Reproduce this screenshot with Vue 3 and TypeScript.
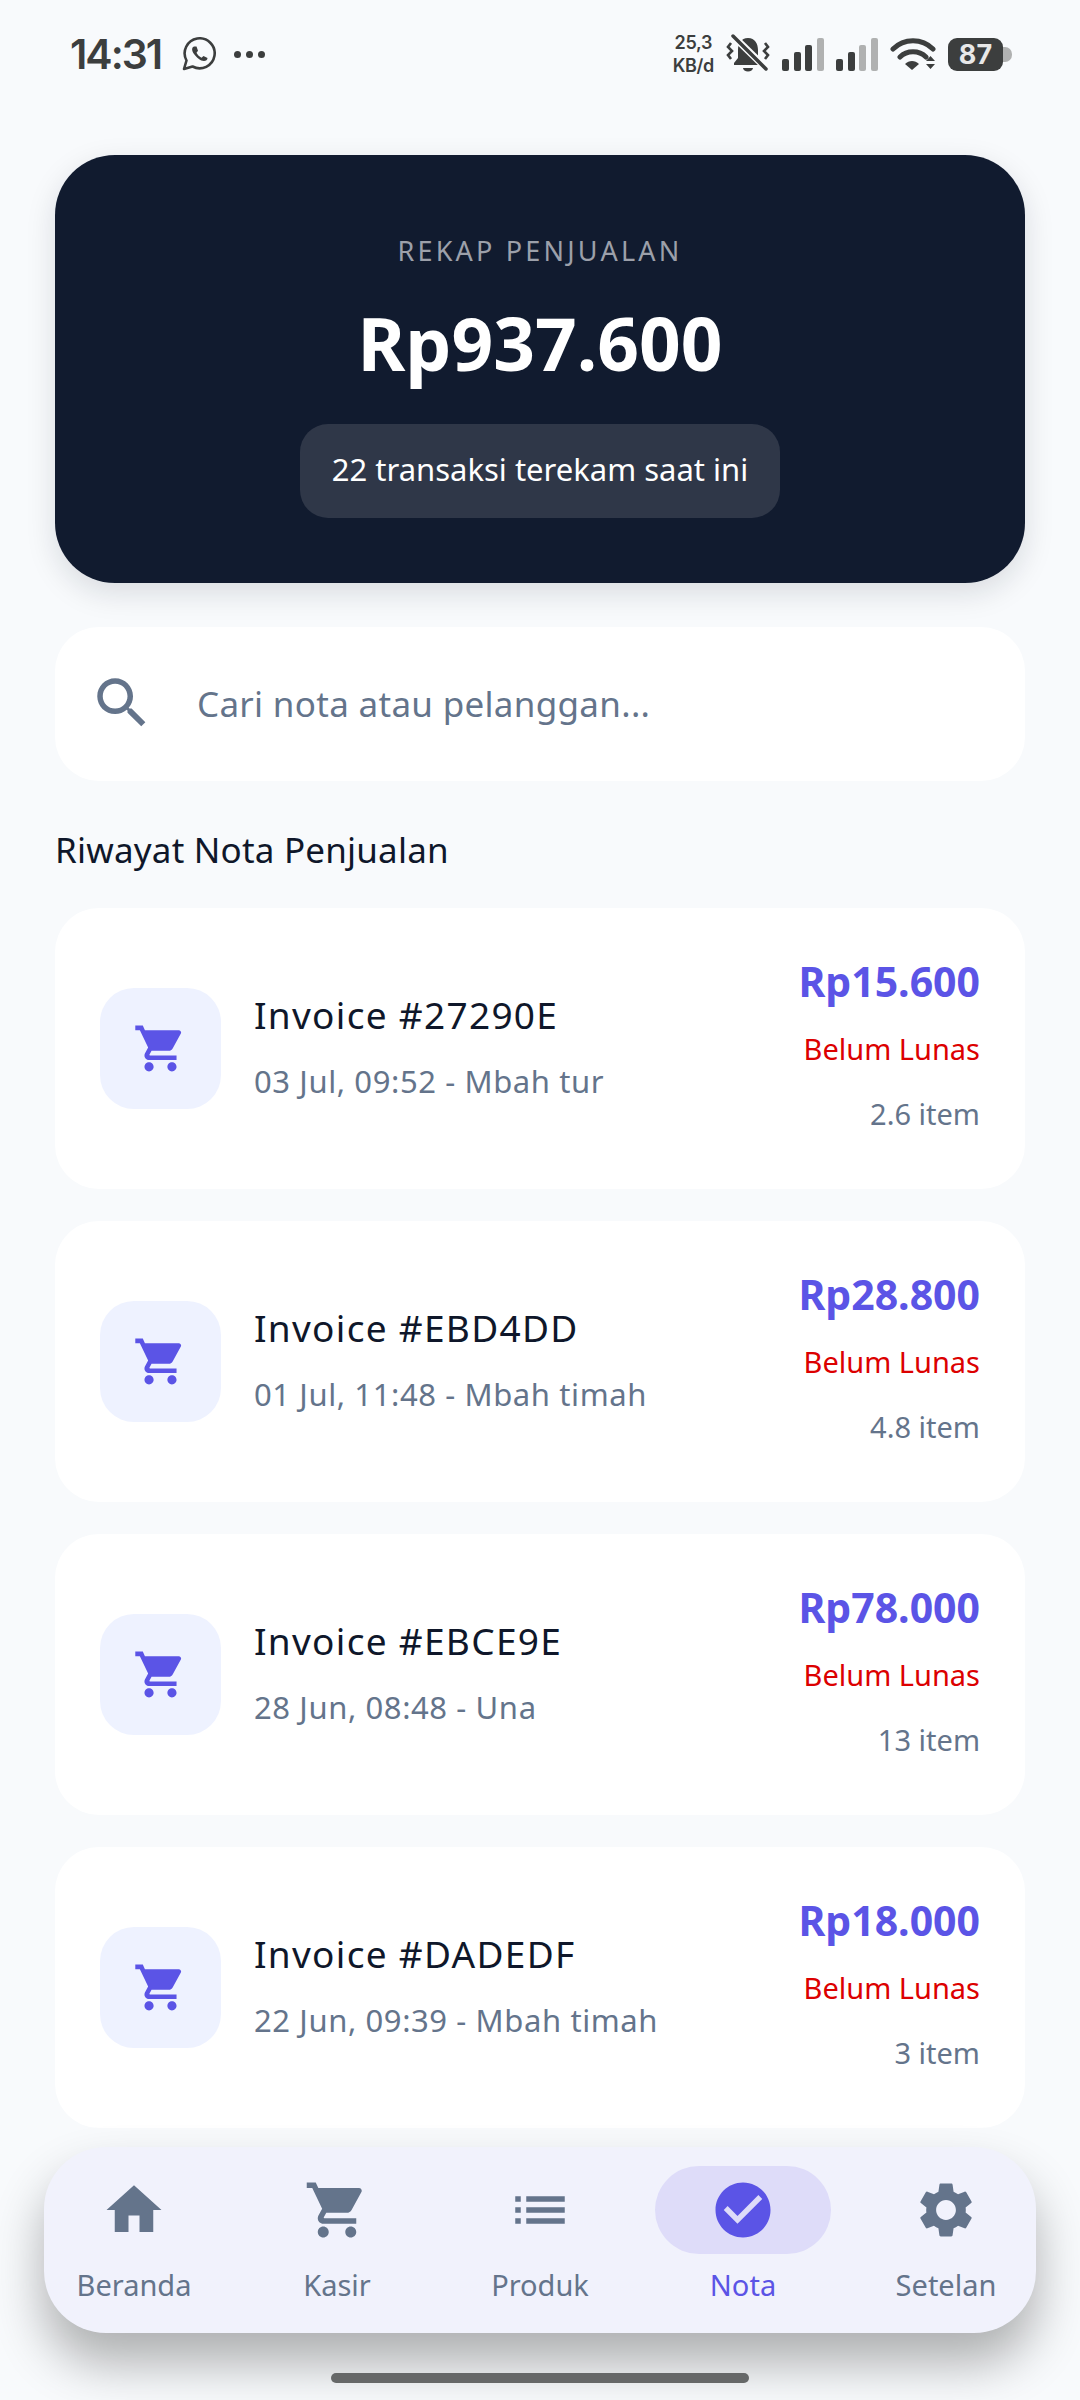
<script setup lang="ts">
const icons = {
  home: 'M10 20v-6h4v6h5v-8h3L12 3 2 12h3v8z',
  cart: 'M7 18c-1.1 0-1.99.9-1.99 2S5.9 22 7 22s2-.9 2-2-.9-2-2-2zM1 2v2h2l3.6 7.59-1.35 2.45c-.16.28-.25.61-.25.96 0 1.1.9 2 2 2h12v-2H7.42c-.14 0-.25-.11-.25-.25l.03-.12.9-1.63h7.45c.75 0 1.41-.41 1.75-1.03l3.58-6.49c.08-.14.12-.31.12-.48 0-.55-.45-1-1-1H5.21l-.94-2H1zm16 16c-1.1 0-1.99.9-1.99 2s.89 2 1.99 2 2-.9 2-2-.9-2-2-2z',
  list: 'M3 13h2v-2H3v2zm0 4h2v-2H3v2zm0-8h2V7H3v2zm4 4h14v-2H7v2zm0 4h14v-2H7v2zM7 7v2h14V7H7z',
  check: 'M12 2C6.48 2 2 6.48 2 12s4.48 10 10 10 10-4.48 10-10S17.52 2 12 2zm-2 15l-5-5 1.41-1.41L10 14.17l7.59-7.59L19 8l-9 9z',
  gear: 'M19.14 12.94c.04-.3.06-.61.06-.94 0-.32-.02-.64-.07-.94l2.03-1.58c.18-.14.23-.41.12-.61l-1.92-3.32c-.12-.22-.37-.29-.59-.22l-2.39.96c-.5-.38-1.03-.7-1.62-.94l-.36-2.54c-.04-.24-.24-.41-.48-.41h-3.84c-.24 0-.43.17-.47.41l-.36 2.54c-.59.24-1.13.57-1.62.94l-2.39-.96c-.22-.08-.47 0-.59.22L2.74 8.87c-.12.21-.08.47.12.61l2.03 1.58c-.05.3-.09.63-.09.94s.02.64.07.94l-2.03 1.58c-.18.14-.23.41-.12.61l1.92 3.32c.12.22.37.29.59.22l2.39-.96c.5.38 1.03.7 1.62.94l.36 2.54c.05.24.24.41.48.41h3.84c.24 0 .44-.17.47-.41l.36-2.54c.59-.24 1.13-.56 1.62-.94l2.39.96c.22.08.47 0 .59-.22l1.92-3.32c.12-.22.07-.47-.12-.61l-2.01-1.58zM12 15.6c-1.98 0-3.6-1.62-3.6-3.6s1.62-3.6 3.6-3.6 3.6 1.62 3.6 3.6-1.62 3.6-3.6 3.6z',
  search: 'M15.5 14h-.79l-.28-.27C15.41 12.59 16 11.11 16 9.5 16 5.91 13.09 3 9.5 3S3 5.91 3 9.5 5.91 16 9.5 16c1.61 0 3.09-.59 4.23-1.57l.27.28v.79l5 4.99L20.49 19l-4.99-5zm-6 0C7.01 14 5 11.99 5 9.5S7.01 5 9.5 5 14 7.01 14 9.5 11.99 14 9.5 14z'
}

const invoices = [
  { id: '27290E', meta: '03 Jul, 09:52 - Mbah tur', total: 'Rp15.600', qty: '2.6 item' },
  { id: 'EBD4DD', meta: '01 Jul, 11:48 - Mbah timah', total: 'Rp28.800', qty: '4.8 item' },
  { id: 'EBCE9E', meta: '28 Jun, 08:48 - Una', total: 'Rp78.000', qty: '13 item' },
  { id: 'DADEDF', meta: '22 Jun, 09:39 - Mbah timah', total: 'Rp18.000', qty: '3 item' }
]

const tabs = [
  { label: 'Beranda', icon: icons.home, active: false },
  { label: 'Kasir', icon: icons.cart, active: false },
  { label: 'Produk', icon: icons.list, active: false },
  { label: 'Nota', icon: icons.check, active: true },
  { label: 'Setelan', icon: icons.gear, active: false }
]
</script>

<template>
  <div class="screen">
    <div class="status-bar">
      <div class="status-left">
        <span class="clock">14:31</span>
        <svg class="wa" viewBox="0 0 34 34" width="34" height="34">
          <path d="M2 32l2.500-8.500a15 15 0 1 1 6 6z" fill="none" stroke="#3c3e3e" stroke-width="2.600" stroke-linejoin="round" />
          <path d="M12 9.500c-2.500 1-2.500 4 0 7.500s6.500 7 10 7c2 0 3.500-1 3.500-3l-4-2-2 1.800c-2-1-4-3-5-5l1.500-2-1.500-4.300z" fill="#3c3e3e" />
        </svg>
        <span class="dots"><i></i><i></i><i></i></span>
      </div>
      <div class="status-right">
        <span class="speed">25,3<br />KB/d</span>
        <svg viewBox="0 0 44 40" width="44" height="40">
          <path d="M22 4c-7 0-10 6-10 12v8l-4 5v2h28v-2l-4-5v-8c0-6-3-12-10-12zM17 34h10a5 3.500 0 0 1-10 0z" fill="#3c3e3e" />
          <path d="M5 0l36 35" stroke="#fbfcfd" stroke-width="7" />
          <path d="M7 2l33 33" stroke="#3c3e3e" stroke-width="3.500" stroke-linecap="round" />
          <path d="M5 9l-3 4 4 4-4 4 3 4M39 9l3 4-4 4 4 4-3 4" fill="none" stroke="#3c3e3e" stroke-width="2.600" />
        </svg>
        <svg viewBox="0 0 42 33" width="42" height="33">
          <rect x="0" y="21" width="7" height="12" rx="2" fill="#3c3e3e" />
          <rect x="12" y="14" width="7" height="19" rx="2" fill="#3c3e3e" />
          <rect x="23" y="7" width="7" height="26" rx="2" fill="#3c3e3e" />
          <rect x="35" y="0" width="7" height="33" rx="2" fill="#b0b1b1" />
        </svg>
        <svg viewBox="0 0 42 33" width="42" height="33">
          <rect x="0" y="21" width="7" height="12" rx="2" fill="#3c3e3e" />
          <rect x="12" y="14" width="7" height="19" rx="2" fill="#3c3e3e" />
          <rect x="23" y="7" width="7" height="26" rx="2" fill="#b0b1b1" />
          <rect x="35" y="0" width="7" height="33" rx="2" fill="#b0b1b1" />
        </svg>
        <svg viewBox="0 0 46 34" width="46" height="34">
          <path d="M3 12c11-11 29-11 40 0M10 20c7-7 19-7 26 0" fill="none" stroke="#3c3e3e" stroke-width="5" stroke-linecap="round" />
          <path d="M15 27c4-4 10-4 14 0l-7 6z" fill="#3c3e3e" />
          <path d="M36 24l4.500-5 4.500 5zM36 27l4.500 5 4.500-5z" fill="#3c3e3e" />
        </svg>
        <div class="battery"><span>87</span></div>
      </div>
    </div>

    <main class="content">
      <section class="hero">
        <p class="hero-label">REKAP PENJUALAN</p>
        <p class="hero-total">Rp937.600</p>
        <div class="hero-pill">22 transaksi terekam saat ini</div>
      </section>

      <div class="search">
        <svg class="search-icon" viewBox="0 0 24 24"><path :d="icons.search" /></svg>
        <span>Cari nota atau pelanggan...</span>
      </div>

      <h2 class="section-title">Riwayat Nota Penjualan</h2>

      <div class="invoice-list">
        <article v-for="inv in invoices" :key="inv.id" class="invoice">
          <div class="tile">
            <svg viewBox="0 0 24 24"><path :d="icons.cart" /></svg>
          </div>
          <div class="invoice-info">
            <div class="invoice-id">Invoice #{{ inv.id }}</div>
            <div class="invoice-meta">{{ inv.meta }}</div>
          </div>
          <div class="invoice-side">
            <div class="invoice-total">{{ inv.total }}</div>
            <div class="invoice-status">Belum Lunas</div>
            <div class="invoice-qty">{{ inv.qty }}</div>
          </div>
        </article>
      </div>
    </main>

    <nav class="tabbar">
      <div v-for="tab in tabs" :key="tab.label" class="tab" :class="{ active: tab.active }">
        <div class="tab-icon">
          <svg viewBox="0 0 24 24"><path :d="tab.icon" /></svg>
        </div>
        <span>{{ tab.label }}</span>
      </div>
    </nav>

    <div class="home-bar"></div>
  </div>
</template>

<style>
html,
body {
  margin: 0;
  background: #f8fafc;
}
</style>

<style scoped>
.screen {
  position: relative;
  width: 1080px;
  height: 2400px;
  overflow: hidden;
  background: #f8fafc;
  font-family: "Noto Sans", "Open Sans", sans-serif;
  color: #0f172a;
}

.status-bar {
  height: 108px;
  padding: 0 68px 0 70px;
  box-sizing: border-box;
  display: flex;
  justify-content: space-between;
  align-items: center;
  color: #3c3e3e;
}

.status-left,
.status-right {
  display: flex;
  align-items: center;
}

.clock {
  width: 92px;
  font-family: Inter, sans-serif;
  font-size: 41px;
  font-weight: 600;
  letter-spacing: -2px;
  white-space: nowrap;
}

.wa {
  margin-left: 20px;
}

.dots {
  display: flex;
  gap: 5px;
  margin-left: 18px;
}

.dots i {
  width: 7px;
  height: 7px;
  border-radius: 50%;
  background: #3c3e3e;
}

.status-right {
  gap: 12px;
}

.speed {
  font-family: Inter, sans-serif;
  font-size: 18px;
  font-weight: 600;
  line-height: 23px;
  letter-spacing: -0.300px;
  text-align: center;
}

.battery {
  position: relative;
  width: 55px;
  height: 33px;
  border-radius: 9px;
  background: #3c3e3e;
  color: #e8e8e8;
  margin-right: 9px;
  font-family: Inter, sans-serif;
  font-size: 27px;
  font-weight: 700;
  line-height: 33px;
  text-align: center;
}

.battery::after {
  content: "";
  position: absolute;
  right: -9px;
  top: 9px;
  width: 9px;
  height: 15px;
  border-radius: 0 7px 7px 0;
  background: #b0b1b1;
}

.content {
  padding: 47px 55px 0;
}

.hero {
  height: 428px;
  box-sizing: border-box;
  padding-top: 76px;
  border-radius: 60px;
  background: #111b2f;
  box-shadow: 0 10px 30px rgba(15, 23, 42, 0.13);
  display: flex;
  flex-direction: column;
  align-items: center;
}

.hero-label {
  margin: 0;
  font-size: 27px;
  line-height: 40px;
  letter-spacing: 3.200px;
  color: #9ca0aa;
}

.hero-total {
  margin: 24px 0 0;
  font-size: 73px;
  font-weight: 700;
  line-height: 96px;
  color: #fff;
}

.hero-pill {
  margin-top: 33px;
  height: 94px;
  box-sizing: border-box;
  padding: 0 32px 4px;
  display: flex;
  align-items: center;
  border-radius: 28px;
  background: #2f3748;
  color: #fff;
  font-size: 31px;
}

.search {
  margin-top: 44px;
  height: 154px;
  box-sizing: border-box;
  padding: 0 34px 2px;
  display: flex;
  align-items: center;
  gap: 42px;
  border-radius: 44px;
  background: #fff;
  color: #64748b;
  font-size: 35px;
  letter-spacing: 0.300px;
}

.search-icon {
  width: 66px;
  height: 66px;
  fill: #64748b;
  flex: none;
}

.section-title {
  margin: 47px 0 36px;
  font-size: 35px;
  font-weight: 400;
  line-height: 44px;
  letter-spacing: 0.200px;
}

.invoice-list {
  display: flex;
  flex-direction: column;
  gap: 32px;
}

.invoice {
  height: 281px;
  padding: 0 45px;
  display: flex;
  align-items: center;
  border-radius: 44px;
  background: #fff;
}

.tile {
  width: 121px;
  height: 121px;
  flex: none;
  display: flex;
  align-items: center;
  justify-content: center;
  border-radius: 34px;
  background: #eef2ff;
}

.tile svg {
  width: 55px;
  height: 55px;
  fill: #5b54e6;
}

.invoice-info {
  margin-left: 33px;
  padding-bottom: 6px;
  flex: 1;
}

.invoice-id {
  font-size: 37px;
  line-height: 50px;
  letter-spacing: 1.300px;
}

.invoice-meta {
  margin-top: 20px;
  font-size: 31px;
  line-height: 42px;
  letter-spacing: 0.600px;
  color: #64748b;
}

.invoice-side {
  padding-bottom: 8px;
  text-align: right;
}

.invoice-total {
  font-size: 41px;
  font-weight: 700;
  line-height: 50px;
  color: #5b54e6;
}

.invoice-status {
  margin-top: 23px;
  font-size: 29px;
  line-height: 40px;
  color: #dc0000;
}

.invoice-qty {
  margin-top: 25px;
  font-size: 29px;
  line-height: 40px;
  color: #64748b;
}

.tabbar {
  position: absolute;
  left: 44px;
  right: 44px;
  top: 2147px;
  height: 186px;
  box-sizing: border-box;
  padding: 19px 2px 0;
  display: flex;
  justify-content: space-between;
  border-radius: 62px;
  background: #f1f2fc;
  box-shadow: 0 30px 50px rgba(0, 0, 0, 0.3);
}

.tab {
  width: 176px;
  display: flex;
  flex-direction: column;
  align-items: center;
  color: #64748b;
  font-size: 29px;
}

.tab-icon {
  width: 176px;
  height: 88px;
  display: flex;
  align-items: center;
  justify-content: center;
  border-radius: 44px;
}

.tab-icon svg {
  width: 66px;
  height: 66px;
  fill: #64748b;
}

.tab span {
  margin-top: 11px;
  line-height: 40px;
}

.tab.active {
  color: #5b54e6;
}

.tab.active .tab-icon {
  background: #dedcf9;
}

.tab.active .tab-icon svg {
  fill: #5b54e6;
}

.home-bar {
  position: absolute;
  left: 331px;
  top: 2373px;
  width: 418px;
  height: 10px;
  border-radius: 5px;
  background: #666868;
}
</style>
